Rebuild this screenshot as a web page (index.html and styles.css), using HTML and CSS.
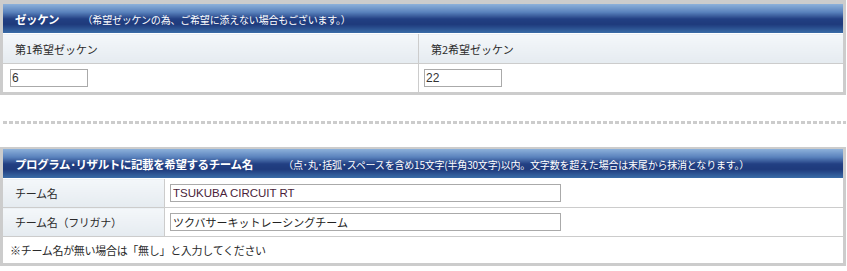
FILE: index.html
```html
<!DOCTYPE html>
<html lang="ja">
<head>
    <meta charset="UTF-8">
    <title>エントリー</title>
    <link rel="stylesheet" href="styles.css">
</head>
<body>

<!-- ゼッケン -->
<table class="entry-box number-box">
    <colgroup>
        <col class="col-half">
        <col>
    </colgroup>
    <tr>
        <th class="box-title" colspan="2">
            <span class="title-main">ゼッケン</span>
            <span class="title-note title-note-short">（希望ゼッケンの為、ご希望に添えない場合もございます。）</span>
        </th>
    </tr>
    <tr class="col-head">
        <td>第1希望ゼッケン</td>
        <td>第2希望ゼッケン</td>
    </tr>
    <tr class="input-row">
        <td class="first"><input type="text" class="num-input" value="6"></td>
        <td><input type="text" class="num-input" value="22"></td>
    </tr>
</table>

<div class="separator"></div>

<!-- チーム名 -->
<table class="entry-box team-box">
    <colgroup>
        <col class="col-label">
        <col>
    </colgroup>
    <tr>
        <th class="box-title" colspan="2">
            <span class="title-main">プログラム･リザルトに記載を希望するチーム名</span>
            <span class="title-note title-note-long">（点･丸･括弧･スペースを含め15文字(半角30文字)以内。文字数を超えた場合は末尾から抹消となります。）</span>
        </th>
    </tr>
    <tr class="field-row">
        <td class="label">チーム名</td>
        <td class="value"><input type="text" class="team-input team-name" value="TSUKUBA CIRCUIT RT"></td>
    </tr>
    <tr class="field-row">
        <td class="label">チーム名（フリガナ）</td>
        <td class="value"><input type="text" class="team-input" value="ツクバサーキットレーシングチーム"></td>
    </tr>
    <tr class="note-row">
        <td colspan="2">※チーム名が無い場合は「無し」と入力してください</td>
    </tr>
</table>

</body>
</html>
```

FILE: styles.css
```css
body {
    margin: 0;
    padding: 0;
    background-color: #fff;
    font-family: "Noto Sans CJK JP", "Liberation Sans", sans-serif;
    color: #2a2a2a;
}

.entry-box {
    width: 846px;
    table-layout: fixed;
    border-collapse: collapse;
    border: 3px solid #ccc;
    border-top-width: 4px;
    border-spacing: 0;
    font-size: 11px;
}

.entry-box td,
.entry-box th {
    padding: 0;
}

.col-half {
    width: 417px;
}

.col-label {
    width: 163px;
}

.box-title {
    height: 29px;
    text-align: left;
    padding-left: 12px !important;
    background: linear-gradient(#8db1da 0%, #5a82bd 28%, #223f82 52%, #1e3a7c 70%, #3a6ca7 100%);
    border-bottom: 1px solid #fff;
    color: #fff;
    white-space: nowrap;
    overflow: hidden;
}

.title-main {
    font-size: 11.5px;
    font-weight: bold;
    letter-spacing: -0.4px;
}

.title-note {
    font-size: 10px;
    font-weight: normal;
    letter-spacing: -0.2px;
}

.title-note-short {
    margin-left: 21px;
}

.title-note-long {
    margin-left: 28px;
}

/* ゼッケン */
.col-head td {
    height: 29px;
    padding-left: 12px;
    background: linear-gradient(#f4f7fa, #e5ebf0);
    border-bottom: 1px solid #ccc;
    font-size: 11px;
}

.col-head td:first-child,
.input-row td:first-child {
    border-right: 1px solid #ccc;
}

.input-row td {
    height: 28px;
    padding-left: 5px;
    vertical-align: middle;
}

.input-row td.first {
    padding-left: 7px;
}

.num-input {
    display: block;
    width: 78px;
    height: 18px;
    box-sizing: border-box;
    margin: 0;
    padding: 0 1px;
    border: 1px solid #aaa;
    font-family: "Liberation Sans", sans-serif;
    font-size: 12px;
    color: #333;
}

/* 区切り */
.separator {
    height: 3px;
    margin: 26px 0 23px 3px;
    width: 843px;
    background: repeating-linear-gradient(to right, #ccc 0 4px, transparent 4px 6px);
}

/* チーム名 */
.team-box {
    border-top-width: 2px;
}

.field-row td {
    height: 28px;
    border-bottom: 1px solid #ccc;
}

.field-row .label {
    padding-left: 12px;
    background: linear-gradient(#f4f7fa, #e5ebf0);
    border-right: 1px solid #ccc;
    letter-spacing: -0.3px;
}

.field-row .value {
    padding-left: 5px;
}

.team-input {
    display: block;
    width: 391px;
    height: 18px;
    box-sizing: border-box;
    margin: 0;
    padding: 0 2px;
    border: 1px solid #aaa;
    font-family: "Noto Sans CJK JP", "Liberation Sans", sans-serif;
    font-size: 11px;
    color: #222;
}

.team-input.team-name {
    font-family: "Liberation Sans", sans-serif;
    font-size: 11.5px;
    color: #4a1e3a;
}

.note-row td {
    height: 26px;
    padding-left: 7px;
    font-size: 11px;
    letter-spacing: -0.3px;
}
```
